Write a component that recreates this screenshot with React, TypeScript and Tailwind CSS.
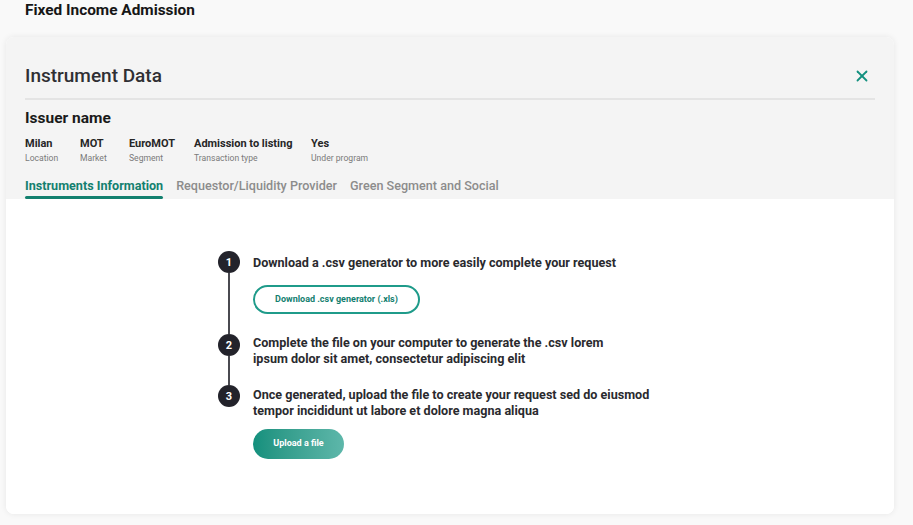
import { X } from 'lucide-react';

const facts = [
  { value: 'Milan', label: 'Location', w: 'w-[55px]' },
  { value: 'MOT', label: 'Market', w: 'w-[49px]' },
  { value: 'EuroMOT', label: 'Segment', w: 'w-[65px]' },
  { value: 'Admission to listing', label: 'Transaction type', w: 'w-[117px]' },
  { value: 'Yes', label: 'Under program', w: '' },
];

function StepCircle({ n }: { n: number }) {
  return (
    <div className="w-[22px] h-[22px] shrink-0 rounded-full bg-[#23232b] text-white text-[11px] font-bold flex items-center justify-center leading-none">
      {n}
    </div>
  );
}

export default function App() {
  return (
    <div
      className="min-h-[525px] bg-[#f9f9f9] text-[#1e1e1e]"
      style={{ fontFamily: 'Roboto, "Noto Sans", sans-serif' }}
    >
      <div className="px-[25px] pt-[0px] h-[37px]">
        <h1 className="text-[15.4px] leading-[20px] font-bold text-[#161616]">Fixed Income Admission</h1>
      </div>

      <div className="mx-[6px] w-[888px] h-[477px] rounded-[8px] overflow-hidden shadow-[0_0_6px_rgba(0,0,0,0.08)] bg-white flex flex-col">
        {/* header */}
        <div className="bg-[#f4f4f4] px-[19px] pt-[27px]">
          <div className="flex items-center justify-between h-[24px]">
            <h2 className="text-[19px] leading-[24px] font-medium text-[#2f2f33]">Instrument Data</h2>
            <X className="w-[18px] h-[18px] text-[#13907f] mr-[4px]" strokeWidth={2.4} />
          </div>
          <div className="mt-[10px] h-[2px] bg-[#e4e4e4]" />

          <h3 className="mt-[8px] text-[15.5px] leading-[20px] font-bold text-[#1a1a1a]">Issuer name</h3>

          <div className="mt-[9px] flex">
            {facts.map((f) => (
              <div key={f.value} className={`${f.w} flex flex-col`}>
                <span className="text-[11px] leading-[13px] font-bold text-[#262626]">{f.value}</span>
                <span className="mt-[3px] text-[8.6px] leading-[11px] text-[#7a7a7a]">{f.label}</span>
              </div>
            ))}
          </div>

          <div className="mt-[14px] flex gap-[13px] text-[12.6px] leading-[16px] font-medium">
            <div className="flex flex-col">
              <span className="text-[#13806f] font-bold">Instruments Information</span>
              <div className="mt-[2px] h-[3px] rounded-full bg-[#13806f]" />
            </div>
            <span className="text-[#8c8c8c]">Requestor/Liquidity Provider</span>
            <span className="text-[#8c8c8c]">Green Segment and Social</span>
          </div>
        </div>

        {/* body */}
        <div className="flex-1 bg-white pl-[212px] pt-[52px]">
          {/* step 1 */}
          <div className="flex gap-[13px]">
            <div className="flex flex-col items-center">
              <StepCircle n={1} />
              <div className="w-[2px] flex-1 bg-[#4a4a50]" />
            </div>
            <div className="pt-[4px] pb-[20px]">
              <p className="text-[12.6px] leading-[16px] font-bold text-[#2a2a2e]">
                Download a .csv generator to more easily complete your request
              </p>
              <button className="mt-[14px] w-[167px] h-[29px] rounded-full border-2 border-[#1f9b8a] text-[#13806f] text-[9px] font-bold">
                Download .csv generator (.xls)
              </button>
            </div>
          </div>

          {/* step 2 */}
          <div className="flex gap-[13px]">
            <div className="flex flex-col items-center">
              <StepCircle n={2} />
              <div className="w-[2px] flex-1 bg-[#4a4a50]" />
            </div>
            <div className="pt-[1px] pb-[18px]">
              <p className="text-[12.6px] leading-[16px] font-bold text-[#2a2a2e] w-[362px]">
                Complete the file on your computer to generate the .csv lorem ipsum dolor sit amet, consectetur adipiscing elit
              </p>
            </div>
          </div>

          {/* step 3 */}
          <div className="flex gap-[13px]">
            <div className="flex flex-col items-center">
              <StepCircle n={3} />
            </div>
            <div className="mt-[2px]">
              <p className="text-[12.6px] leading-[16px] font-bold text-[#2a2a2e] w-[402px]">
                Once generated, upload the file to create your request sed do eiusmod tempor incididunt ut labore et dolore magna aliqua
              </p>
              <button className="mt-[10px] w-[91px] h-[30px] rounded-full bg-gradient-to-r from-[#12907d] to-[#5db7aa] text-white text-[9px] font-bold">
                Upload a file
              </button>
            </div>
          </div>
        </div>
      </div>
    </div>
  );
}
